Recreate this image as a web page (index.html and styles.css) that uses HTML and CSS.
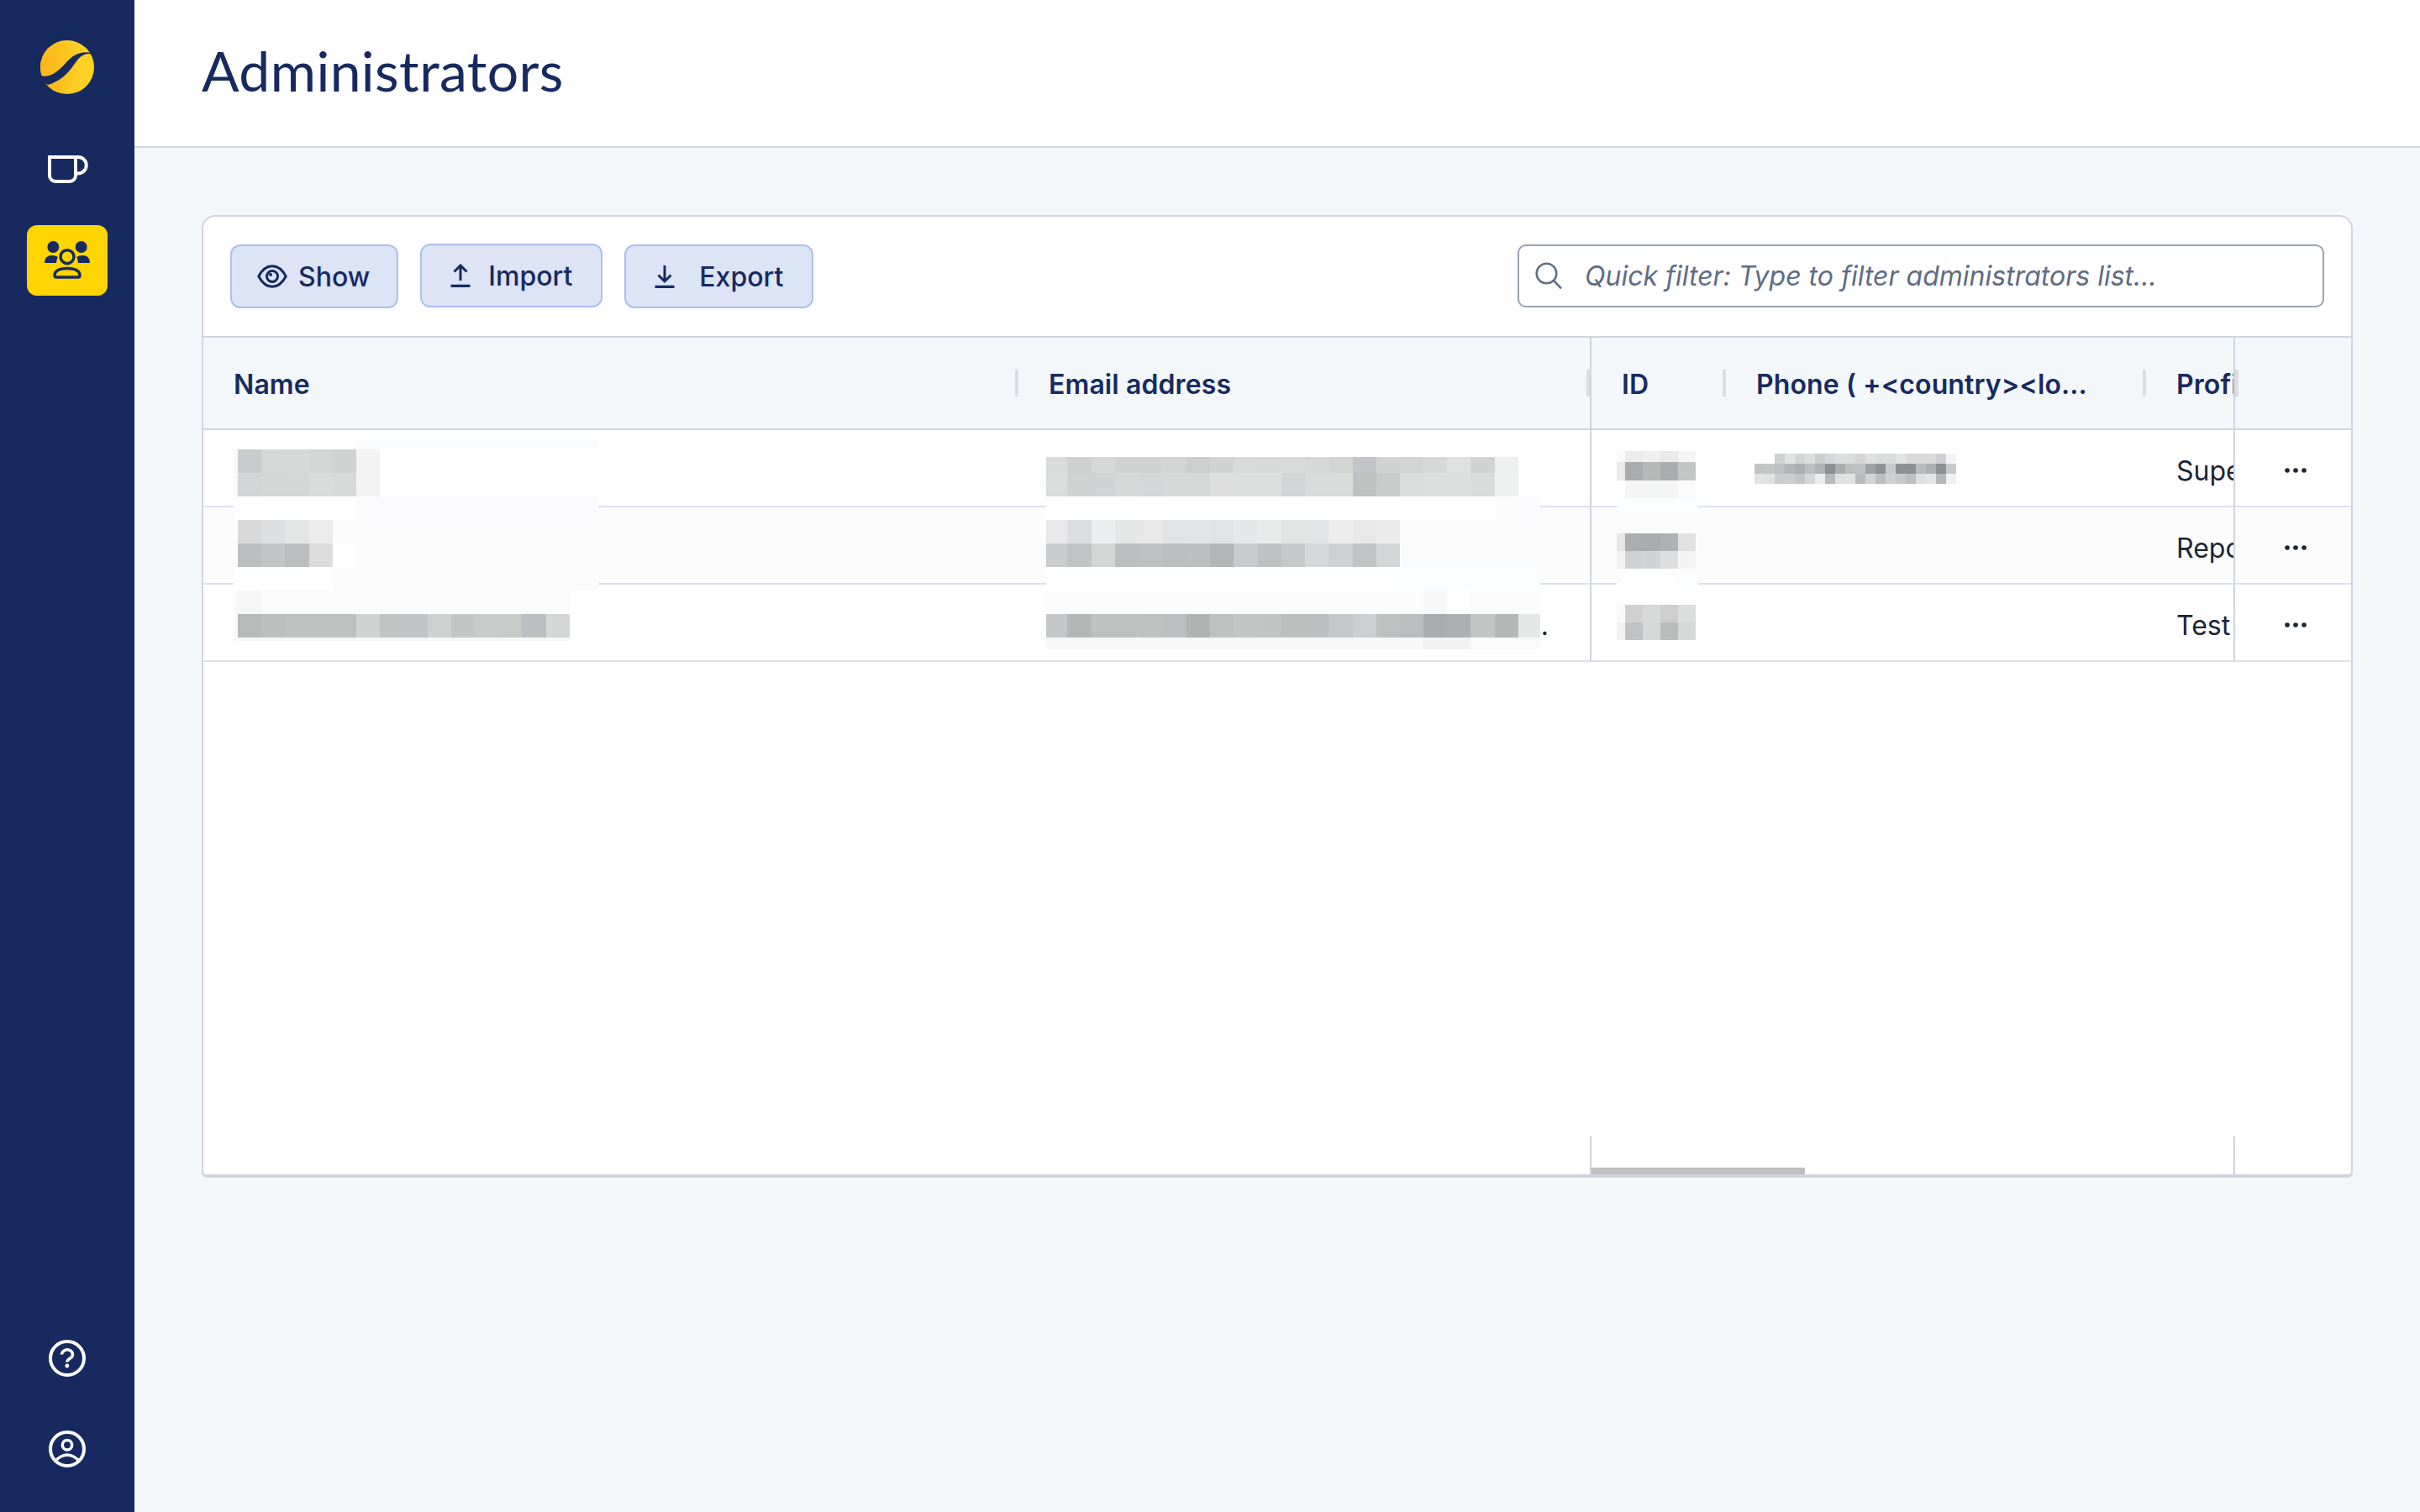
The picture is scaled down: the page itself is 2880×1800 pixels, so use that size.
FILE: index.html
```html
<!DOCTYPE html>
<html lang="en">
<head>
<meta charset="utf-8">
<title>Administrators</title>
<link rel="stylesheet" href="styles.css">
</head>
<body>
<aside class="sidebar">
  <svg class="logo" viewBox="0 0 64 64" width="64" height="64">
    <defs>
      <linearGradient id="lg1" x1="0" y1="0" x2="1" y2="0"><stop offset="0" stop-color="#fdc11f"/><stop offset="1" stop-color="#ffd426"/></linearGradient>
      <linearGradient id="lg2" x1="0" y1="0" x2="1" y2="0"><stop offset="0" stop-color="#fbac1b"/><stop offset="1" stop-color="#ffc91f"/></linearGradient>
      <clipPath id="lc"><circle cx="32" cy="32" r="32"/></clipPath>
    </defs>
    <circle cx="32" cy="32" r="32" fill="url(#lg1)"/>
    <ellipse cx="10" cy="32" rx="32" ry="36" fill="url(#lg2)" clip-path="url(#lc)"/>
    <path d="M-1 41C3 43 7 43 10 42C18 40 25 33 32 25C39 18 47 12 61 15L59 16C50 15 45 22 40 29C34 38 24 49 9 53L-1 47Z" fill="#172a60"/>
  </svg>
  <svg class="cup" viewBox="0 0 48 33" width="48" height="33" fill="none" stroke="#fff" stroke-width="4">
    <path d="M2 2H33V24a7 7 0 0 1-7 7H9a7 7 0 0 1-7-7Z"/>
    <path d="M33 2H36a9.5 9.5 0 0 1 0 19.5H33"/>
  </svg>
  <a class="nav-active">
    <svg viewBox="0 0 60 50" width="60" height="50">
      <circle cx="13.3" cy="9" r="7" fill="#172a60"/>
      <circle cx="46.7" cy="9" r="7" fill="#172a60"/>
      <path d="M3 28q0-9 9-9q4 0 7 2q-2 3-2 7Z" fill="#172a60"/>
      <path d="M57 28q0-9-9-9q-4 0-7 2q2 3 2 7Z" fill="#172a60"/>
      <circle cx="30" cy="20.7" r="8" fill="none" stroke="#172a60" stroke-width="3.5"/>
      <path d="M15 43C15 38 20 34.500 30 34.500S45 38 45 43Q45 45 43 45H17Q15 45 15 43Z" fill="none" stroke="#172a60" stroke-width="3.5"/>
    </svg>
  </a>
  <svg class="help" viewBox="0 0 44 44" width="44" height="44" fill="none" stroke="#fff" stroke-width="4">
    <circle cx="22" cy="22" r="20"/>
    <path d="M15.500 17.500a6.500 5.500 0 1 1 10 4.500c-2.500 1.700-3.700 2.500-3.700 4.500" stroke-width="3.500"/>
    <circle cx="21.800" cy="31" r="2.400" fill="#fff" stroke="none"/>
  </svg>
  <svg class="user" viewBox="0 0 44 44" width="44" height="44" fill="none" stroke="#fff" stroke-width="4">
    <circle cx="22" cy="22" r="20"/>
    <circle cx="22" cy="17.300" r="5.700" stroke-width="3.500"/>
    <path d="M8 36Q22 22 36 36" stroke-width="3.500"/>
  </svg>
</aside>
<main class="main">
  <header class="page-header"><h1 class="page-title">Administrators</h1></header>
  <section class="content">
    <div class="card">
      <div class="toolbar">
        <button class="btn btn-show">
          <svg viewBox="0 0 36 28" width="36" height="28" fill="none" stroke="#172a60" stroke-width="3"><path d="M1.800 14C6 6 11.500 1.800 18 1.800S30 6 34.200 14C30 22 24.500 26.200 18 26.200S6 22 1.800 14Z"/><circle cx="18" cy="14" r="6.500"/><circle cx="16" cy="12" r="2" fill="#172a60" stroke="none"/></svg>
          <span>Show</span>
        </button>
        <button class="btn btn-raised">
          <svg viewBox="0 0 36 28" width="36" height="28" fill="none" stroke="#172a60" stroke-width="3"><path d="M18 20V2M10.500 9.500L18 2l7.500 7.500"/><path d="M6.500 26.500h23" stroke-width="3.500"/></svg>
          <span>Import</span>
        </button>
        <button class="btn btn-export">
          <svg viewBox="0 0 36 28" width="36" height="28" fill="none" stroke="#172a60" stroke-width="3"><path d="M18 1V20M10.500 12.500L18 20l7.500-7.500"/><path d="M6.500 26.500h23" stroke-width="3.500"/></svg>
          <span>Export</span>
        </button>
        <div class="search">
          <svg viewBox="0 0 32 32" width="32" height="32" fill="none" stroke="#667085" stroke-width="2.600"><circle cx="13.500" cy="13.500" r="11.800"/><path d="M22 22l9 9.500"/></svg>
          <span class="search-text">Quick filter: Type to filter administrators list...</span>
        </div>
      </div>
      <div class="grid">
        <div class="pane pane-left">
          <div class="head">
            <div class="hcell col-name">Name</div>
            <div class="hcell col-email">Email address</div>
          </div>
          <div class="row"><div class="cell col-name"></div><div class="cell col-email"></div></div>
          <div class="row row-alt"><div class="cell col-name"></div><div class="cell col-email"></div></div>
          <div class="row"><div class="cell col-name"></div><div class="cell col-email cell-ellipsis">…</div></div>
          <div class="filler"></div>
          <div class="foot"></div>
        </div>
        <div class="pane pane-center">
          <div class="head lined">
            <div class="hcell col-id">ID</div>
            <div class="hcell col-phone">Phone ( +&lt;country&gt;&lt;lo...</div>
            <div class="hcell col-profile">Profile</div>
          </div>
          <div class="row lined"><div class="cell col-id"></div><div class="cell col-phone"></div><div class="cell col-profile">Super</div></div>
          <div class="row row-alt lined"><div class="cell col-id"></div><div class="cell col-phone"></div><div class="cell col-profile">Repor</div></div>
          <div class="row lined"><div class="cell col-id"></div><div class="cell col-phone"></div><div class="cell col-profile">Test</div></div>
          <div class="filler"></div>
          <div class="foot lined"><div class="thumb"></div></div>
        </div>
        <div class="pane pane-right">
          <div class="head lined head-actions"></div>
          <div class="row lined actions"><svg viewBox="0 0 26 6" width="26" height="6"><circle cx="3" cy="3" r="2.800"/><circle cx="13" cy="3" r="2.800"/><circle cx="23" cy="3" r="2.800"/></svg></div>
          <div class="row row-alt lined actions"><svg viewBox="0 0 26 6" width="26" height="6"><circle cx="3" cy="3" r="2.800"/><circle cx="13" cy="3" r="2.800"/><circle cx="23" cy="3" r="2.800"/></svg></div>
          <div class="row lined actions"><svg viewBox="0 0 26 6" width="26" height="6"><circle cx="3" cy="3" r="2.800"/><circle cx="13" cy="3" r="2.800"/><circle cx="23" cy="3" r="2.800"/></svg></div>
          <div class="filler"></div>
          <div class="foot lined"></div>
        </div>

        <svg class="mosaic mosaic-name" viewBox="0 0 434 240" width="434" height="240">
          <path fill="#fff" d="M0 0H434V240H0z"/>
          <path fill="#fbfcfd" d="M146 0H434V12H146z"/>
          <path fill="#f8f8f8" d="M0 12H5V68H0z"/>
          <path fill="#c9cacb" d="M5 12H33V40H5z"/><path fill="#d6d8d7" d="M33 12H61V40H33z"/><path fill="#d7d9d8" d="M61 12H90V40H61z"/><path fill="#d3d6d5" d="M90 12H118V40H90z"/><path fill="#cfd2d1" d="M118 12H146V40H118z"/><path fill="#f4f4f4" d="M146 12H174V40H146z"/>
          <path fill="#d3d4d6" d="M5 40H33V68H5z"/><path fill="#d5d7d6" d="M33 40H61V68H33z"/><path fill="#d5d7d6" d="M61 40H90V68H61z"/><path fill="#dadbdb" d="M90 40H118V68H90z"/><path fill="#d8dad9" d="M118 40H146V68H118z"/><path fill="#f4f4f4" d="M146 40H174V68H146z"/>
          <path fill="#fbfbfd" d="M146 68H434V96H146z"/>
          <path fill="#fcfcfc" d="M0 96H434V180H0z"/>
          <path fill="#fff" d="M0 152H118V180H0z"/>
          <path fill="#d9d9d9" d="M5 96H33V124H5z"/><path fill="#dedfe0" d="M33 96H61V124H33z"/><path fill="#e4e6e5" d="M61 96H90V124H61z"/><path fill="#ececec" d="M90 96H118V124H90z"/><path fill="#fbfbfb" d="M118 96H146V124H118z"/>
          <path fill="#bdbebf" d="M5 124H33V152H5z"/><path fill="#c4c5c6" d="M33 124H61V152H33z"/><path fill="#bcbdbf" d="M61 124H90V152H61z"/><path fill="#dcdcdc" d="M90 124H118V152H90z"/><path fill="#fff" d="M118 124H146V152H118z"/>
          <path fill="#fbfbfb" d="M0 180H400V208H0z"/><path fill="#f6f6f6" d="M5 180H33V208H5z"/>
          <path fill="#f9f9f9" d="M0 208H5V240H0z"/>
          <path fill="#b8bab9" d="M5 208H33V236H5z"/><path fill="#bdbfbe" d="M33 208H61V236H33z"/><path fill="#bfc1c0" d="M61 208H90V236H61z"/><path fill="#bfc1c0" d="M90 208H118V236H90z"/><path fill="#bfc1c0" d="M118 208H146V236H118z"/><path fill="#d2d4d3" d="M146 208H174V236H146z"/><path fill="#c2c4c4" d="M174 208H202V236H174z"/><path fill="#c2c3c5" d="M202 208H231V236H202z"/><path fill="#cfd1d0" d="M231 208H259V236H231z"/><path fill="#c4c6c5" d="M259 208H287V236H259z"/><path fill="#c9cbca" d="M287 208H315V236H287z"/><path fill="#c8cac9" d="M315 208H343V236H315z"/><path fill="#bdbec1" d="M343 208H372V236H343z"/><path fill="#d5d7d6" d="M372 208H400V236H372z"/>
          <path fill="#f8f8f8" d="M0 236H400V240H0z"/>
        </svg>

        <svg class="mosaic mosaic-email" viewBox="0 0 588 229" width="588" height="229">
          <path fill="#dadcdb" d="M0 0H25V19H0z"/><path fill="#ced0cf" d="M25 0H54V19H25z"/><path fill="#d6d8d7" d="M54 0H82V19H54z"/><path fill="#d1d3d2" d="M82 0H111V19H82z"/><path fill="#d1d3d2" d="M111 0H139V19H111z"/><path fill="#d3d5d4" d="M139 0H167V19H139z"/><path fill="#cdcfce" d="M167 0H195V19H167z"/><path fill="#d2d4d3" d="M195 0H223V19H195z"/><path fill="#d9dbda" d="M223 0H252V19H223z"/><path fill="#d8dad9" d="M252 0H280V19H252z"/><path fill="#d9dbda" d="M280 0H308V19H280z"/><path fill="#d7d8d8" d="M308 0H336V19H308z"/><path fill="#d3d4d4" d="M336 0H365V19H336z"/><path fill="#c4c5c8" d="M365 0H393V19H365z"/><path fill="#d2d3d3" d="M393 0H421V19H393z"/><path fill="#d3d4d4" d="M421 0H449V19H421z"/><path fill="#d7d9d8" d="M449 0H477V19H449z"/><path fill="#e0e2e1" d="M477 0H505V19H477z"/><path fill="#d2d3d3" d="M505 0H534V19H505z"/><path fill="#eef0ef" d="M534 0H562V19H534z"/>
          <path fill="#dbdddc" d="M0 19H25V47H0z"/><path fill="#d1d3d2" d="M25 19H54V47H25z"/><path fill="#d2d3d5" d="M54 19H82V47H54z"/><path fill="#d6d8d7" d="M82 19H111V47H82z"/><path fill="#d5d6d8" d="M111 19H139V47H111z"/><path fill="#d7d9d8" d="M139 19H167V47H139z"/><path fill="#d6d8d7" d="M167 19H195V47H167z"/><path fill="#dfdfdf" d="M195 19H223V47H195z"/><path fill="#dddfde" d="M223 19H252V47H223z"/><path fill="#dddfde" d="M252 19H280V47H252z"/><path fill="#d3d4d6" d="M280 19H308V47H280z"/><path fill="#d9dbda" d="M308 19H336V47H308z"/><path fill="#dadcdb" d="M336 19H365V47H336z"/><path fill="#bfc1c0" d="M365 19H393V47H365z"/><path fill="#cacccb" d="M393 19H421V47H393z"/><path fill="#dcdedd" d="M421 19H449V47H421z"/><path fill="#dddfde" d="M449 19H477V47H449z"/><path fill="#dddfde" d="M477 19H505V47H477z"/><path fill="#dadcdb" d="M505 19H534V47H505z"/><path fill="#eff1f0" d="M534 19H562V47H534z"/>
          <path fill="#fff" d="M0 47H588V75H0z"/><path fill="#fcfcfd" d="M534 47H562V75H534z"/><path fill="#fbfbfd" d="M562 47H588V75H562z"/>
          <path fill="#fcfcfc" d="M0 75H588V131H0z"/>
          <path fill="#e9e9eb" d="M0 75H25V103H0z"/><path fill="#dddee0" d="M25 75H54V103H25z"/><path fill="#ecedef" d="M54 75H82V103H54z"/><path fill="#e5e6e6" d="M82 75H111V103H82z"/><path fill="#e8e8e8" d="M111 75H139V103H111z"/><path fill="#e2e3e4" d="M139 75H167V103H139z"/><path fill="#e3e4e5" d="M167 75H195V103H167z"/><path fill="#e2e3e5" d="M195 75H223V103H195z"/><path fill="#e6e7e9" d="M223 75H252V103H223z"/><path fill="#e8eae9" d="M252 75H280V103H252z"/><path fill="#e3e4e4" d="M280 75H308V103H280z"/><path fill="#e3e4e5" d="M308 75H336V103H308z"/><path fill="#ececec" d="M336 75H365V103H336z"/><path fill="#e8e8e8" d="M365 75H393V103H365z"/><path fill="#ebebeb" d="M393 75H421V103H393z"/>
          <path fill="#cbcccd" d="M0 103H25V131H0z"/><path fill="#c3c4c6" d="M25 103H54V131H25z"/><path fill="#d4d6d5" d="M54 103H82V131H54z"/><path fill="#bdbebf" d="M82 103H111V131H82z"/><path fill="#bfc0c1" d="M111 103H139V131H111z"/><path fill="#bcbdbf" d="M139 103H167V131H139z"/><path fill="#bdbebf" d="M167 103H195V131H167z"/><path fill="#b4b5b6" d="M195 103H223V131H195z"/><path fill="#c9cacc" d="M223 103H252V131H223z"/><path fill="#c0c1c3" d="M252 103H280V131H252z"/><path fill="#c7c8ca" d="M280 103H308V131H280z"/><path fill="#d7d8da" d="M308 103H336V131H308z"/><path fill="#d0d1d3" d="M336 103H365V131H336z"/><path fill="#c3c4c6" d="M365 103H393V131H365z"/><path fill="#d4d5d7" d="M393 103H421V131H393z"/>
          <path fill="#fff" d="M0 131H421V159H0z"/><path fill="#fcfdfe" d="M421 131H588V159H421z"/>
          <path fill="#fcfcfc" d="M0 159H588V187H0z"/><path fill="#f8f8f8" d="M449 159H477V187H449z"/><path fill="#fff" d="M477 159H505V187H477z"/>
          <path fill="#c5c6c8" d="M0 187H25V215H0z"/><path fill="#b5b7b6" d="M25 187H54V215H25z"/><path fill="#c0c2c1" d="M54 187H82V215H54z"/><path fill="#c0c2c1" d="M82 187H111V215H82z"/><path fill="#bfc1c0" d="M111 187H139V215H111z"/><path fill="#bdbfc0" d="M139 187H167V215H139z"/><path fill="#b2b4b3" d="M167 187H195V215H167z"/><path fill="#bfc1c0" d="M195 187H223V215H195z"/><path fill="#c3c5c4" d="M223 187H252V215H223z"/><path fill="#c2c4c3" d="M252 187H280V215H252z"/><path fill="#bdbfbe" d="M280 187H308V215H280z"/><path fill="#bcbec0" d="M308 187H336V215H308z"/><path fill="#c6c7ca" d="M336 187H365V215H336z"/><path fill="#ccced0" d="M365 187H393V215H365z"/><path fill="#c0c2c1" d="M393 187H421V215H393z"/><path fill="#bcbdbf" d="M421 187H449V215H421z"/><path fill="#abacae" d="M449 187H477V215H449z"/><path fill="#aeafb2" d="M477 187H505V215H477z"/><path fill="#c3c5c4" d="M505 187H534V215H505z"/><path fill="#b6b8b7" d="M534 187H562V215H534z"/><path fill="#e6e8e7" d="M562 187H588V215H562z"/>
          <path fill="#f8f8f8" d="M0 215H449V229H0z"/><path fill="#f2f2f2" d="M449 215H505V229H449z"/><path fill="#fafafa" d="M505 215H588V229H505z"/>
        </svg>

        <svg class="mosaic mosaic-id" viewBox="0 0 96 225" width="96" height="225">
          <path fill="#fff" d="M0 0H96V225H0z"/>
          <path fill="#fafafa" d="M0 0H10V13H0z"/><path fill="#ececec" d="M10 0H31V13H10z"/><path fill="#f0f0f0" d="M31 0H52V13H31z"/><path fill="#eaeaea" d="M52 0H73V13H52z"/><path fill="#f5f5f5" d="M73 0H94V13H73z"/>
          <path fill="#eaeaea" d="M0 13H10V35H0z"/><path fill="#aaabac" d="M10 13H31V35H10z"/><path fill="#b7b9b8" d="M31 13H52V35H31z"/><path fill="#abacae" d="M52 13H73V35H52z"/><path fill="#c4c6c5" d="M73 13H94V35H73z"/>
          <path fill="#f5f5f5" d="M10 35H31V56H10z"/><path fill="#f4f5f5" d="M31 35H52V56H31z"/><path fill="#f5f5f5" d="M52 35H73V56H52z"/><path fill="#fbfbfb" d="M73 35H94V56H73z"/>
          <path fill="#fcfdfe" d="M0 56H96V77H0z"/>
          <path fill="#fcfcfc" d="M0 77H96V98H0z"/>
          <path fill="#fcfcfc" d="M0 98H96V140H0z"/>
          <path fill="#e6e6e6" d="M0 98H10V119H0z"/><path fill="#acadae" d="M10 98H31V119H10z"/><path fill="#abacad" d="M31 98H52V119H31z"/><path fill="#b0b1b2" d="M52 98H73V119H52z"/><path fill="#e2e2e2" d="M73 98H94V119H73z"/>
          <path fill="#f3f3f3" d="M0 119H10V140H0z"/><path fill="#d0d1d3" d="M10 119H31V140H10z"/><path fill="#d2d3d5" d="M31 119H52V140H31z"/><path fill="#dfdfdf" d="M52 119H73V140H52z"/><path fill="#f4f4f4" d="M73 119H94V140H73z"/>
          <path fill="#fdfdfe" d="M0 140H10V161H0z"/><path fill="#fefefe" d="M52 140H73V161H52z"/><path fill="#fcfdfe" d="M73 140H96V161H73z"/>
          <path fill="#fafafa" d="M0 183H10V204H0z"/><path fill="#d0d0d0" d="M10 183H31V204H10z"/><path fill="#d8dad9" d="M31 183H52V204H31z"/><path fill="#cecece" d="M52 183H73V204H52z"/><path fill="#dcdedd" d="M73 183H94V204H73z"/>
          <path fill="#f2f2f2" d="M0 204H10V225H0z"/><path fill="#c0c2c3" d="M10 204H31V225H10z"/><path fill="#d6d8d7" d="M31 204H52V225H31z"/><path fill="#babcbb" d="M52 204H73V225H52z"/><path fill="#d6d8d7" d="M73 204H94V225H73z"/>
        </svg>

        <svg class="mosaic mosaic-phone" viewBox="0 0 240 36" width="240" height="36">
          <path fill="#cfd1d0" d="M24 0h12v12H24z"/><path fill="#e2e4e3" d="M36 0h12v12H36z"/><path fill="#d4d6d5" d="M48 0h12v12H48z"/><path fill="#dcdedd" d="M60 0h12v12H60z"/><path fill="#cccecd" d="M72 0h12v12H72z"/><path fill="#d6d7d9" d="M84 0h12v12H84z"/><path fill="#dddfde" d="M96 0h12v12H96z"/><path fill="#dcdedd" d="M108 0h12v12H108z"/><path fill="#d4d6d5" d="M120 0h12v12H120z"/><path fill="#e0e0e0" d="M132 0h12v12H132z"/><path fill="#dbdddc" d="M144 0h12v12H144z"/><path fill="#dadcdb" d="M156 0h12v12H156z"/><path fill="#e3e5e4" d="M168 0h12v12H168z"/><path fill="#dadadb" d="M180 0h12v12H180z"/><path fill="#d9d9db" d="M192 0h12v12H192z"/><path fill="#dadbdb" d="M204 0h12v12H204z"/><path fill="#cfd0d3" d="M216 0h12v12H216z"/><path fill="#f4f4f4" d="M228 0h12v12H228z"/>
          <path fill="#c2c4c3" d="M0 12h12v12H0z"/><path fill="#c4c6c5" d="M12 12h12v12H12z"/><path fill="#bfc1c0" d="M24 12h12v12H24z"/><path fill="#b5b6b7" d="M36 12h12v12H36z"/><path fill="#aeafb0" d="M48 12h12v12H48z"/><path fill="#bdbec0" d="M60 12h12v12H60z"/><path fill="#b1b2b4" d="M72 12h12v12H72z"/><path fill="#8c908f" d="M84 12h12v12H84z"/><path fill="#abaeae" d="M96 12h12v12H96z"/><path fill="#bdbfbe" d="M108 12h12v12H108z"/><path fill="#c0c2c1" d="M120 12h12v12H120z"/><path fill="#a0a1a3" d="M132 12h12v12H132z"/><path fill="#909392" d="M144 12h12v12H144z"/><path fill="#c8cacb" d="M156 12h12v12H156z"/><path fill="#8e9090" d="M168 12h12v12H168z"/><path fill="#8e9090" d="M180 12h12v12H180z"/><path fill="#babbbd" d="M192 12h12v12H192z"/><path fill="#aeafb1" d="M204 12h12v12H204z"/><path fill="#8c8e8f" d="M216 12h12v12H216z"/><path fill="#c8cac9" d="M228 12h12v12H228z"/>
          <path fill="#e3e3e3" d="M0 24h12v12H0z"/><path fill="#e0e2e1" d="M12 24h12v12H12z"/><path fill="#cbcccd" d="M24 24h12v12H24z"/><path fill="#cccdcd" d="M36 24h12v12H36z"/><path fill="#c4c6c5" d="M48 24h12v12H48z"/><path fill="#d4d5d6" d="M60 24h12v12H60z"/><path fill="#eceeed" d="M72 24h12v12H72z"/><path fill="#b8b9ba" d="M84 24h12v12H84z"/><path fill="#dfe1e0" d="M96 24h12v12H96z"/><path fill="#e0e2e1" d="M108 24h12v12H108z"/><path fill="#b8b9bb" d="M120 24h12v12H120z"/><path fill="#d2d4d3" d="M132 24h12v12H132z"/><path fill="#bcbdbe" d="M144 24h12v12H144z"/><path fill="#cfd1d0" d="M156 24h12v12H156z"/><path fill="#c8c9ca" d="M168 24h12v12H168z"/><path fill="#bdbfc0" d="M180 24h12v12H180z"/><path fill="#dedfe0" d="M192 24h12v12H192z"/><path fill="#e3e5e4" d="M204 24h12v12H204z"/><path fill="#b6b7b9" d="M216 24h12v12H216z"/><path fill="#f0f0f0" d="M228 24h12v12H228z"/>
        </svg>
      </div>
    </div>
  </section>
</main>
</body>
</html>
```

FILE: styles.css
```css
* { box-sizing: border-box; }
html, body { height: 100%; }
body {
  margin: 0;
  display: flex;
  height: 1800px;
  overflow: hidden;
  font-family: "Inter", "Liberation Sans", sans-serif;
  font-size: 32px;
  color: #1d2433;
  background: #f3f7fa;
}

/* Sidebar */
.sidebar {
  width: 160px;
  flex: none;
  background: #172a60;
  display: flex;
  flex-direction: column;
  align-items: center;
  padding: 48px 0 53px;
}
.logo { flex: none; }
.cup { flex: none; margin-top: 73px; margin-left: 2px; }
.nav-active {
  width: 96px;
  height: 84px;
  margin-top: 50px;
  background: #ffd500;
  border-radius: 12px;
  display: flex;
  align-items: center;
  justify-content: center;
}
.help { flex: none; margin-top: auto; }
.user { flex: none; margin-top: 64px; }

/* Main */
.main { flex: 1; min-width: 0; display: flex; flex-direction: column; }
.page-header {
  height: 176px;
  flex: none;
  background: #fff;
  border-bottom: 2px solid #d0d5dd;
  padding: 0 0 7px 80px;
  display: flex;
  align-items: center;
}
.page-title {
  margin: 0;
  font-family: "Lato", "Liberation Sans", sans-serif;
  font-size: 66px;
  font-weight: 400;
  letter-spacing: 0.4px;
  color: #172a60;
}
.content { padding: 80px 80px 0; }

/* Card */
.card {
  height: 1144px;
  background: #fff;
  border: 2px solid #d0d5dd;
  border-radius: 16px 16px 6px 6px;
  box-shadow: 0 2px 0 #d0d5dd;
  display: flex;
  flex-direction: column;
  overflow: hidden;
}
.toolbar {
  height: 144px;
  flex: none;
  border-bottom: 2px solid #d0d5dd;
  padding: 0 32px;
  display: flex;
  align-items: center;
  gap: 26px;
}
.btn {
  height: 76px;
  padding: 0 34px 0 28px;
  display: flex;
  align-items: center;
  gap: 15px;
  background: #dce4f6;
  border: 2px solid #aebfee;
  border-radius: 12px;
  font-family: inherit;
  font-size: 32px;
  font-weight: 500;
  color: #172a60;
}
.btn svg { flex: none; }
.btn-show { padding: 0 32px 0 30px; gap: 13px; }
.btn-raised { margin-bottom: 2px; }
.btn-export { gap: 23px; }
.search {
  margin: 0 0 2px auto;
  width: 960px;
  height: 75px;
  border: 2px solid #98a2b3;
  border-radius: 10px;
  padding-left: 19px;
  display: flex;
  align-items: center;
  gap: 27px;
  background: #fff;
}
.search svg { flex: none; }
.search-text { font-style: italic; color: #5f6b85; white-space: nowrap; }

/* Grid */
.grid { position: relative; flex: 1; min-height: 0; display: flex; }
.pane { display: flex; flex-direction: column; min-width: 0; overflow: hidden; }
.pane-left { width: 1650px; flex: none; }
.pane-center { width: 766px; flex: none; }
.pane-right { flex: 1; }
.lined { border-left: 2px solid #cfd3e0; }
.head {
  height: 110px;
  flex: none;
  display: flex;
  background: #f3f7fa;
  border-bottom: 2px solid #d0d5dd;
}
.hcell {
  position: relative;
  flex: none;
  height: 108px;
  display: flex;
  align-items: center;
  padding: 2px 0 0 36px;
  font-weight: 600;
  letter-spacing: 0.1px;
  color: #172a60;
  white-space: nowrap;
}
.hcell::after {
  content: "";
  position: absolute;
  right: 0;
  top: 38px;
  width: 4px;
  height: 32px;
  background: #dadde1;
}
.row {
  height: 92px;
  flex: none;
  display: flex;
  background: #fff;
  border-bottom: 2px solid #dde1ee;
}
.row-alt { background: #fcfcfc; }
.cell {
  flex: none;
  height: 90px;
  padding-left: 36px;
  padding-top: 6px;
  display: flex;
  align-items: center;
  white-space: nowrap;
  overflow: hidden;
}
.col-name { width: 970px; }
.col-email { width: 680px; }
.col-id { width: 160px; }
.col-phone { width: 500px; }
.col-profile { width: 300px; }
.cell-ellipsis { justify-content: flex-end; padding-right: 49px; }
.head-actions { position: relative; }
.head-actions::before {
  content: "";
  position: absolute;
  left: 0;
  top: 38px;
  width: 4px;
  height: 32px;
  background: #dadde1;
}
.actions { align-items: center; padding: 6px 0 0 59px; }
.actions svg { fill: #1d2433; }
.filler { flex: 1; }
.foot { height: 46px; flex: none; position: relative; }
.thumb {
  position: absolute;
  left: 0;
  bottom: 0;
  width: 254px;
  height: 8px;
  background: #bfbfbf;
}

/* Blurred data */
.mosaic { position: absolute; shape-rendering: crispEdges; }
.mosaic-name { left: 36px; top: 121px; }
.mosaic-email { left: 1003px; top: 142px; }
.mosaic-id { left: 1682px; top: 135px; }
.mosaic-phone { left: 1846px; top: 138px; }
```
